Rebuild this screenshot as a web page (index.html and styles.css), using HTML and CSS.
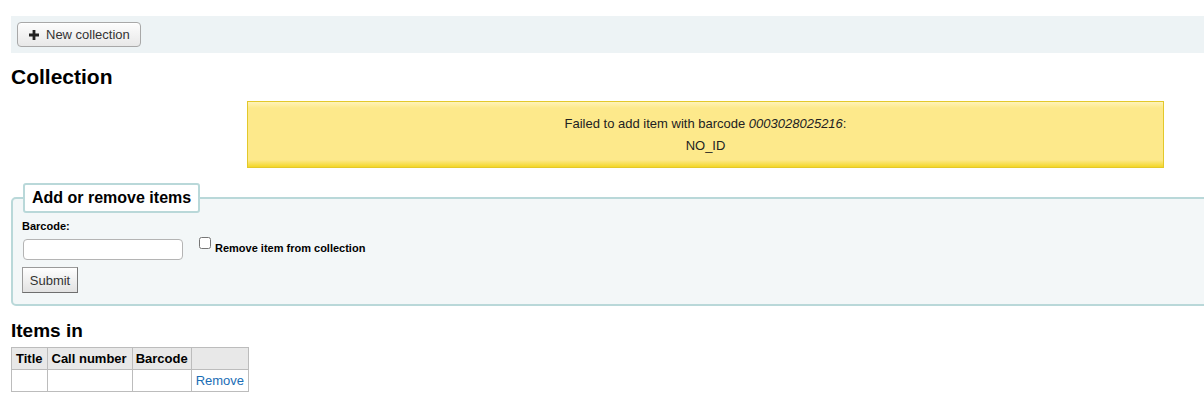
FILE: index.html
```html
<!DOCTYPE html>
<html>
<head>
<meta charset="utf-8">
<title>Collection</title>
<link rel="stylesheet" href="styles.css">
</head>
<body>
<div class="main">
  <div class="toolbar">
    <button class="btn" type="button"><svg class="plus" width="10" height="10" viewBox="0 0 10 10"><path d="M3.6 0h2.8v3.6H10v2.8H6.4V10H3.6V6.4H0V3.6h3.6z" fill="#222"/></svg>New collection</button>
  </div>
  <h1 class="title">Collection</h1>
  <div class="alert">
    <p>Failed to add item with barcode <em>0003028025216</em>:</p>
    <p>NO_ID</p>
  </div>
  <fieldset class="rows">
    <legend>Add or remove items</legend>
    <label class="lbl" for="barcode">Barcode:</label>
    <div class="inrow">
      <input class="txt" id="barcode" type="text">
      <input class="chk" id="remove" type="checkbox">
      <label class="lbl2" for="remove">Remove item from collection</label>
    </div>
    <button class="submit" type="button">Submit</button>
  </fieldset>
  <h2 class="sub">Items in</h2>
  <table class="items">
    <thead>
      <tr><th>Title</th><th class="cn">Call number</th><th class="bc">Barcode</th><th></th></tr>
    </thead>
    <tbody>
      <tr><td></td><td></td><td></td><td><a class="link" href="#">Remove</a></td></tr>
    </tbody>
  </table>
</div>
</body>
</html>
```

FILE: styles.css
```css
html, body {
  margin: 0;
  padding: 0;
  background: #fff;
  overflow: hidden;
}
body {
  font-family: "Liberation Sans", Arial, sans-serif;
  font-size: 13px;
  color: #000;
}
.main {
  padding: 16px 0 20px 11px;
  overflow: hidden;
}
.toolbar {
  background: #edf3f5;
  padding: 6px;
  height: 25px;
  margin-right: -12px;
}
.btn {
  display: inline-flex;
  align-items: center;
  gap: 7px;
  height: 25px;
  width: 124px;
  padding: 0 0 0 11px;
  font-family: "Liberation Sans", Arial, sans-serif;
  font-size: 13px;
  color: #333;
  background: linear-gradient(#fdfdfd, #e8e8e8);
  border: 1px solid #a8a8a8;
  border-radius: 4px;
  box-shadow: inset 0 1px 0 #fff;
}
.plus {
  flex: none;
}
.title {
  font-size: 21px;
  font-weight: bold;
  line-height: 24px;
  margin: 12px 0 0 0;
}
.alert {
  width: 915px;
  margin: 12px 0 0 236px;
  padding: 11px 0 10px 0;
  text-align: center;
  color: #222;
  border: 1px solid #e3c82a;
  background: linear-gradient(#fff3b8 0px, #fde98b 6px, #fde98b 58px, #f2d418 66px);
}
.alert p {
  margin: 0;
  line-height: 22px;
}
.rows {
  margin: 15px -12px 0 0;
  padding: 7px 9px 11px 9px;
  border: 2px solid #b9d8d9;
  border-radius: 5px;
  background: #f3f7f8;
}
.rows legend {
  padding: 4px 7px;
  margin: 0 0 0 1px;
  font-size: 16px;
  font-weight: bold;
  line-height: 18px;
  background: #fff;
  border: 2px solid #b9d8d9;
  border-radius: 3px;
}
.lbl {
  display: block;
  font-size: 11px;
  font-weight: bold;
  line-height: 13px;
}
.inrow {
  margin-top: 6px;
  display: flex;
  align-items: flex-start;
}
.txt {
  width: 160px;
  height: 21px;
  box-sizing: border-box;
  margin: 0 0 0 1px;
  padding: 2px 4px;
  font-family: "Liberation Sans", Arial, sans-serif;
  font-size: 13px;
  border: 1px solid #b4b4b4;
  border-radius: 4px;
  background: #fff;
}
.chk {
  width: 12px;
  height: 12px;
  margin: 0 4px 0 16px;
  position: relative;
  top: -2px;
}
.lbl2 {
  font-size: 11px;
  font-weight: bold;
  line-height: 13px;
  margin-top: 3px;
}
.submit {
  display: block;
  margin-top: 7px;
  height: 26px;
  width: 56px;
  padding: 0;
  font-family: "Liberation Sans", Arial, sans-serif;
  font-size: 13px;
  color: #333;
  background: linear-gradient(#fefefe, #e2e2e2);
  border: 1px solid #9a9a9a;
  border-bottom-color: #6e6e6e;
  border-right-color: #777;
  border-radius: 0;
}
.sub {
  font-size: 19px;
  font-weight: bold;
  line-height: 22px;
  margin: 14px 0 0 0;
}
.items {
  border-collapse: collapse;
  margin-top: 5px;
}
.items th, .items td {
  border: 1px solid #bcbcbc;
  padding: 3px 4px;
  line-height: 15px;
  font-size: 13px;
}
.items th {
  background: #e8e8e8;
  font-weight: bold;
  text-align: left;
}
.items th.cn {
  padding: 3px 5px 3px 4px;
}
.items th.bc {
  padding: 3px 3px;
}
.items td {
  height: 15px;
}
.link {
  color: #1a6db5;
  text-decoration: none;
}
```
